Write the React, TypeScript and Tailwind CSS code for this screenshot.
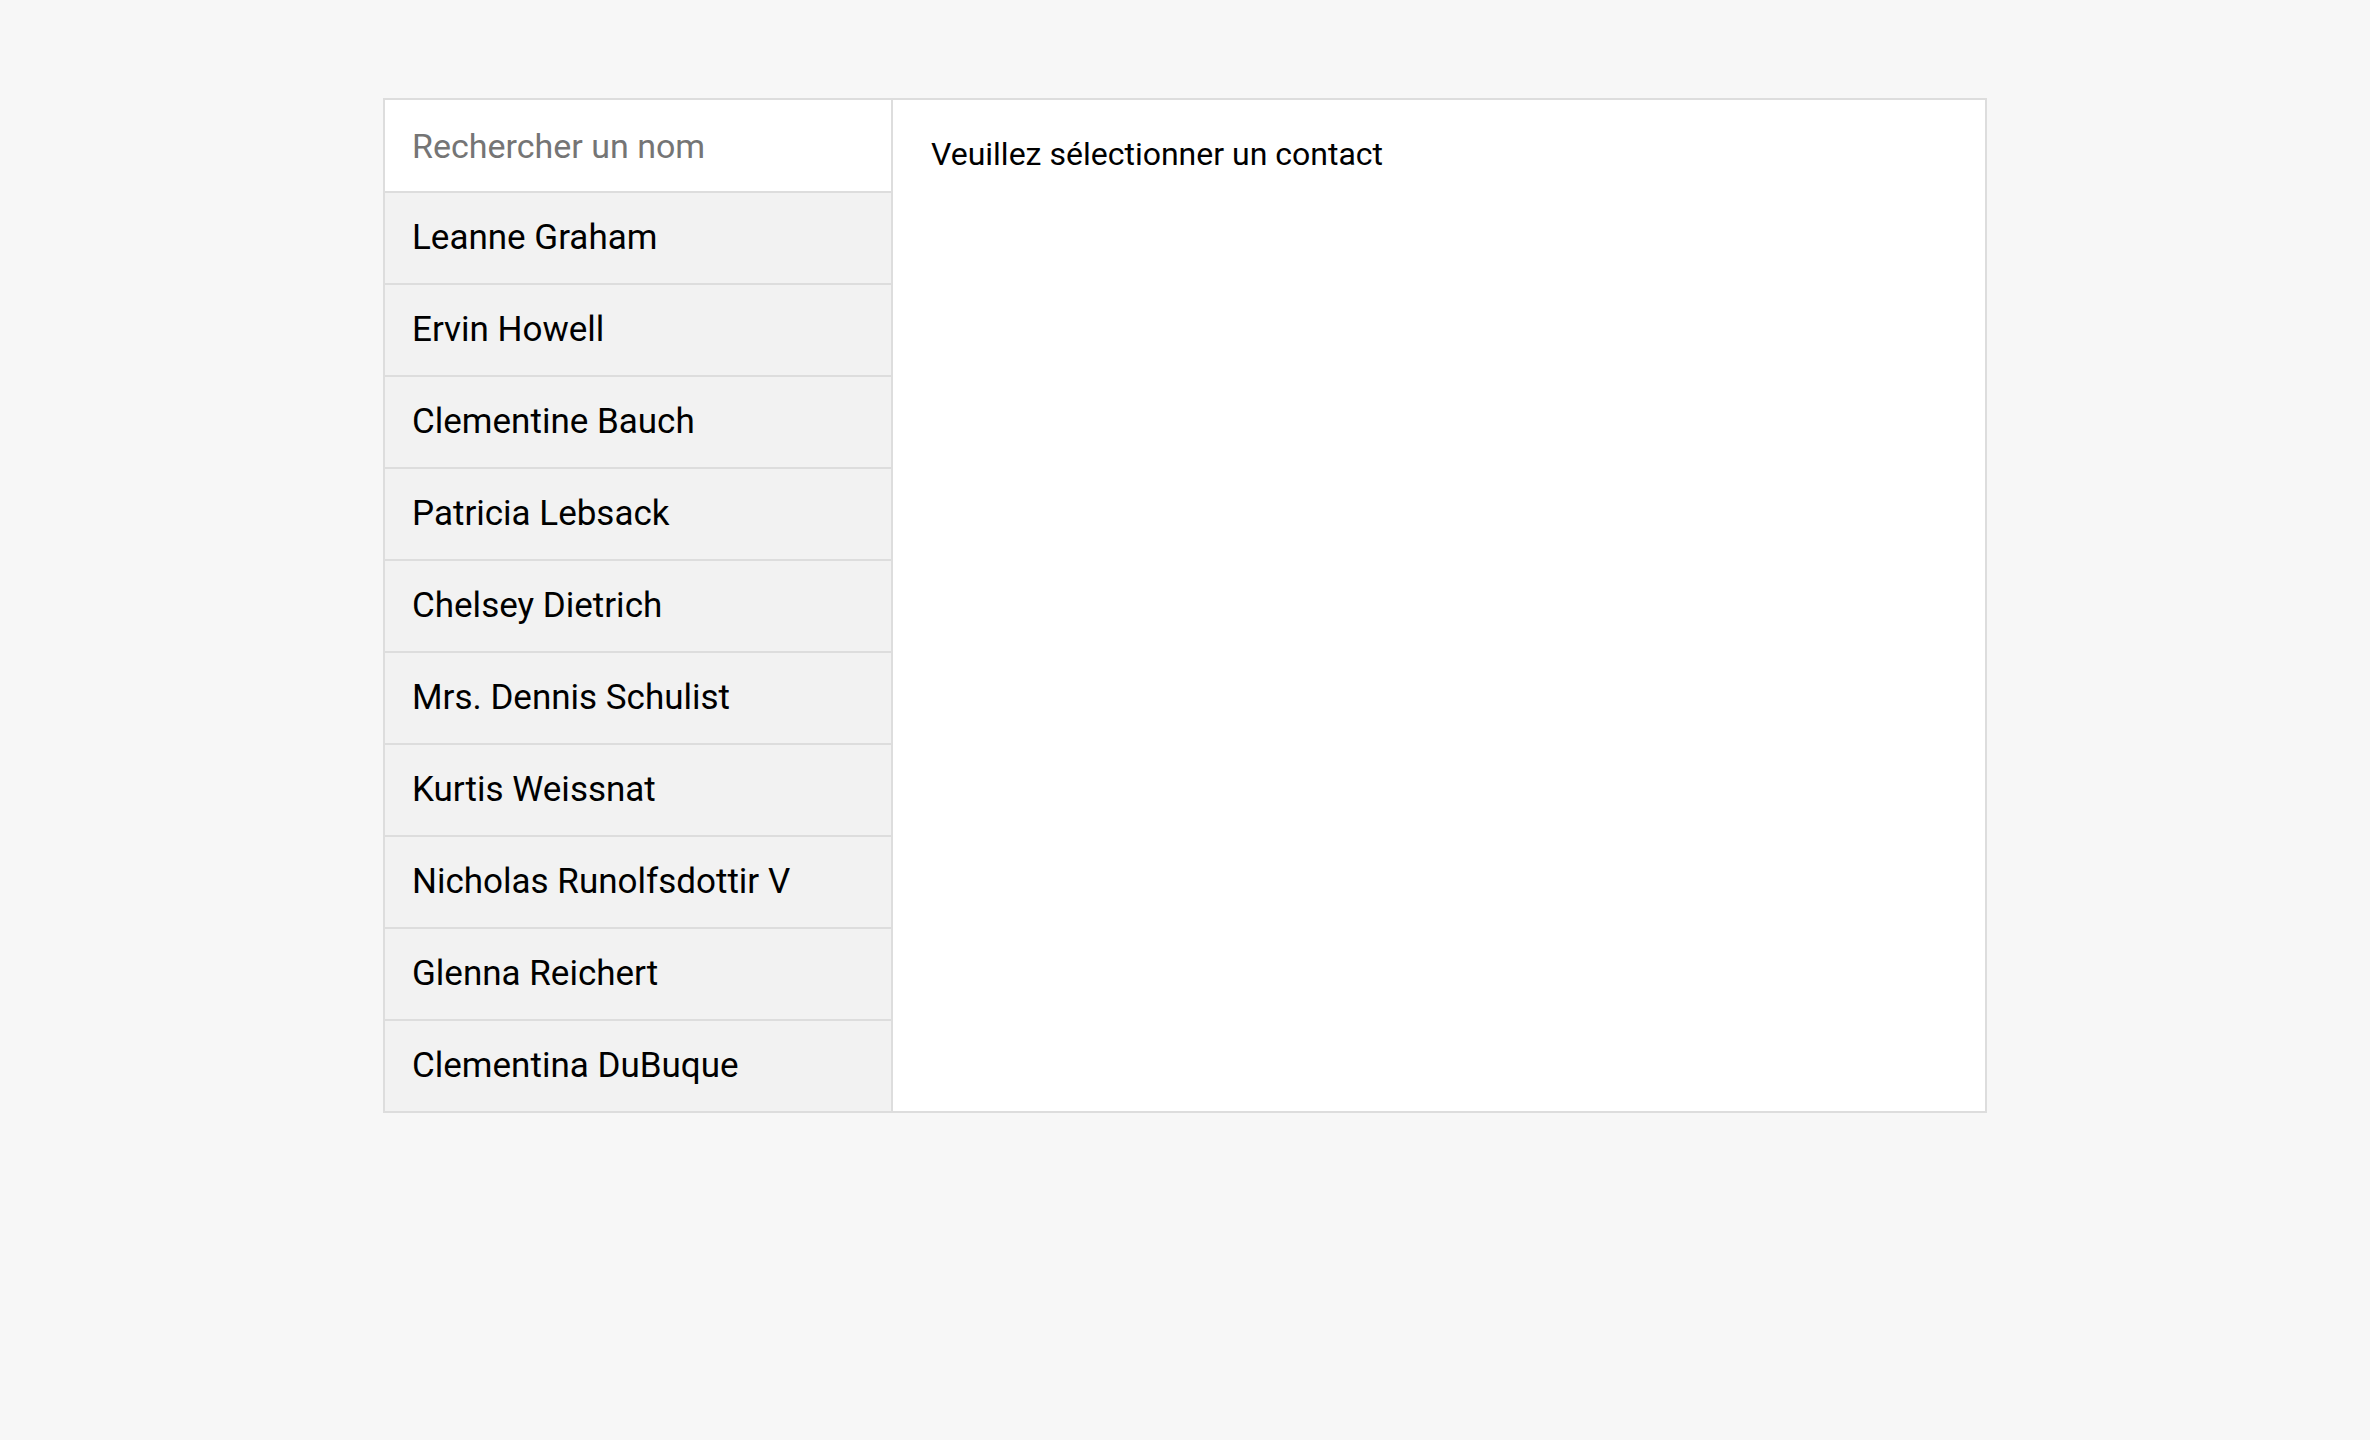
import React from 'react';

const contacts = [
  'Leanne Graham',
  'Ervin Howell',
  'Clementine Bauch',
  'Patricia Lebsack',
  'Chelsey Dietrich',
  'Mrs. Dennis Schulist',
  'Kurtis Weissnat',
  'Nicholas Runolfsdottir V',
  'Glenna Reichert',
  'Clementina DuBuque',
];

export default function App() {
  return (
    <div className="min-h-screen bg-[#f7f7f7] pt-[98px] font-['Roboto',sans-serif]">
      <div className="mx-auto flex w-[1604px] border-2 border-[#dddddd] bg-white">
        <div className="flex w-[508px] flex-col border-r-2 border-[#dddddd]">
          <input
            type="text"
            placeholder="Rechercher un nom"
            className="h-[93px] border-b-2 border-[#dddddd] bg-white px-[27px] text-[34px] text-black outline-none placeholder:text-[#757575]"
          />
          <ul>
            {contacts.map((name, idx) => (
              <li
                key={name}
                className={`flex items-center bg-[#f2f2f2] px-[27px] text-[35px] text-black ${
                  idx !== contacts.length - 1 ? 'h-[92px] border-b-2 border-[#dddddd]' : 'h-[90px]'
                }`}
              >
                {name}
              </li>
            ))}
          </ul>
        </div>
        <div className="flex-1 px-[38px] pt-[30px]">
          <p className="text-[32px] text-black">Veuillez sélectionner un contact</p>
        </div>
      </div>
    </div>
  );
}
